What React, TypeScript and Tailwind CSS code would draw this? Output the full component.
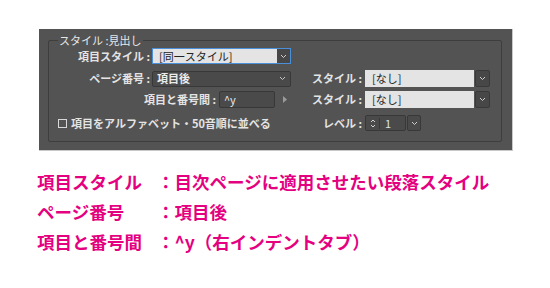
import React from "react";

function Chevron({ className = "" }: { className?: string }) {
  return (
    <svg width="7" height="5" viewBox="0 0 7 5" className={className}>
      <path d="M1 1l2.5 2.5L6 1" fill="none" stroke="currentColor" strokeWidth="1" />
    </svg>
  );
}

function LightSelect({ value }: { value: string }) {
  return (
    <div className="flex h-[17px] w-[125px]">
      <div className="flex flex-1 items-center bg-[#e4e4e4] pl-[7px] text-[11px] text-[#222]">{value}</div>
      <div className="ml-[1px] flex w-[15px] items-center justify-center rounded-[2px] border border-[#393939] bg-[#474747] text-[#cfcfcf]">
        <Chevron />
      </div>
    </div>
  );
}

export default function App() {
  const label = "whitespace-nowrap text-[11px] font-bold text-[#e4e4e4]";
  return (
    <div
      className="h-[288px] w-[550px] overflow-hidden bg-white pt-[29px]"
      style={{ fontFamily: '"Noto Sans CJK JP", sans-serif' }}
    >
      <div className="ml-[39px] h-[122px] w-[474px] border-b border-r border-[#c8c8c8] bg-[#535353] pl-[9px] pr-[10px] pt-[4px]">
        <fieldset className="h-[109px] rounded-[2px] border border-[#3e3e3e] pl-[9px] pr-[11px]">
          <legend className="px-[1px] text-[11px] leading-[14px] text-[#e8e8e8]">スタイル :見出し</legend>

          <div className="mt-[1px] flex h-[16px]">
            <div className="flex w-[233px] items-center justify-end gap-[2px]">
              <span className={label}>項目スタイル :</span>
              <div className="flex h-[16px] w-[139px] border border-[#4a8fd8]">
                <div className="flex flex-1 items-center bg-[#e4e4e4] pl-[6px] text-[11px] text-[#222]">[同一スタイル]</div>
                <div className="flex w-[13px] items-center justify-center bg-[#474747] text-[#cfcfcf]">
                  <Chevron />
                </div>
              </div>
            </div>
          </div>

          <div className="mt-[6px] flex h-[17px]">
            <div className="flex w-[233px] items-center justify-end gap-[2px]">
              <span className={label}>ページ番号 :</span>
              <div className="flex h-[16px] w-[139px] items-center justify-between rounded-[2px] border border-[#383838] bg-[#4a4a4a] pl-[4px] pr-[4px] text-[11px] font-bold text-[#ececec]">
                項目後
                <Chevron className="text-[#c8c8c8]" />
              </div>
            </div>
            <div className="flex flex-1 items-center justify-end gap-[3px]">
              <span className={label}>スタイル :</span>
              <LightSelect value="[なし]" />
            </div>
          </div>

          <div className="mt-[4px] flex h-[17px]">
            <div className="flex w-[233px] items-center justify-end gap-[3px]">
              <span className={label}>項目と番号間 :</span>
              <div className="flex h-[17px] w-[56px] items-center rounded-[2px] border border-[#383838] bg-[#4a4a4a] pl-[4px] text-[11px] text-[#ececec]">
                ^y
              </div>
              <div className="flex w-[13px] items-center justify-center">
                <svg width="4" height="7" viewBox="0 0 4 7">
                  <path d="M0 0l4 3.5L0 7z" fill="#9a9a9a" />
                </svg>
              </div>
            </div>
            <div className="flex flex-1 items-center justify-end gap-[3px]">
              <span className={label}>スタイル :</span>
              <LightSelect value="[なし]" />
            </div>
          </div>

          <div className="mt-[7px] flex h-[16px]">
            <div className="flex w-[233px] items-center gap-[4px]">
              <div className="h-[9px] w-[9px] border border-[#d8d8d8]" />
              <span className={label}>項目をアルファベット・50音順に並べる</span>
            </div>
            <div className="flex flex-1 items-center justify-end">
              <span className={label + " mr-[3px]"}>レベル :</span>
              <div className="flex h-[16px] w-[125px]">
                <div className="flex h-[16px] w-[41px] items-center rounded-[2px] border border-[#383838] bg-[#4a4a4a]">
                  <div className="flex w-[14px] flex-col items-center border-r border-[#383838] text-[#cfcfcf]">
                    <svg width="6" height="11" viewBox="0 0 6 11">
                      <path d="M1 4l2-2 2 2M1 7l2 2 2-2" fill="none" stroke="currentColor" strokeWidth="1" />
                    </svg>
                  </div>
                  <span className="pl-[5px] text-[11px] text-[#d8e4f0]">1</span>
                </div>
                <div className="ml-[1px] flex h-[16px] w-[14px] items-center justify-center rounded-[2px] border border-[#383838] bg-[#4a4a4a] text-[#cfcfcf]">
                  <Chevron />
                </div>
              </div>
            </div>
          </div>
        </fieldset>
      </div>

      <div className="ml-[37px] mt-[16px] grid grid-cols-[120px_auto] text-[17.5px] font-bold leading-[30px] text-[#e4007f]">
        <span>項目スタイル</span>
        <span>：目次ページに適用させたい段落スタイル</span>
        <span>ページ番号</span>
        <span>：項目後</span>
        <span>項目と番号間</span>
        <span>：^y（右インデントタブ）</span>
      </div>
    </div>
  );
}
